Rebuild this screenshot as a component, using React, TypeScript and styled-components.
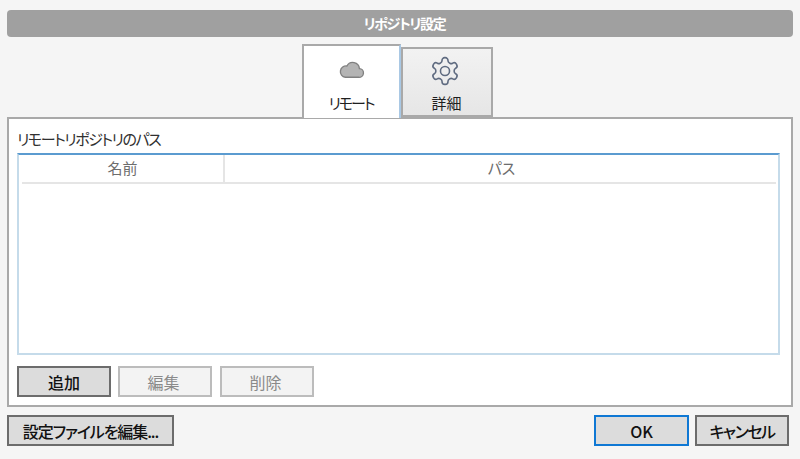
import React from 'react';
import styled, { createGlobalStyle } from 'styled-components';

const GlobalStyle = createGlobalStyle`
  html, body {
    margin: 0;
    padding: 0;
    background: #f5f5f5;
  }
  body {
    font-family: "Noto Sans CJK JP", "Noto Sans", "Liberation Sans", sans-serif;
    font-feature-settings: "palt";
  }
`;

const Page = styled.div`
  width: 800px;
  height: 459px;
  box-sizing: border-box;
  padding: 10px 7px 0;
  display: flex;
  flex-direction: column;
  overflow: hidden;
`;

const TitleBar = styled.div`
  height: 27px;
  flex: none;
  box-sizing: border-box;
  padding-left: 9px;
  border-radius: 4px;
  background: #a0a0a0;
  color: #fff;
  font-size: 14px;
  font-weight: 700;
  letter-spacing: -1.3px;
  line-height: 27px;
  text-align: center;
`;

const TabRow = styled.div`
  display: flex;
  justify-content: center;
  align-items: flex-end;
  height: 81px;
  flex: none;
  padding-right: 6px;
  position: relative;
  z-index: 1;
  margin-bottom: -1px;
`;

const Tab = styled.div<{ $active?: boolean }>`
  box-sizing: border-box;
  width: ${(p) => (p.$active ? 99 : 92)}px;
  height: ${(p) => (p.$active ? 74 : 70)}px;
  margin-bottom: ${(p) => (p.$active ? 0 : 1)}px;
  border: 2px solid #a9a9a9;
  border-bottom: ${(p) => (p.$active ? 'none' : '2px solid #a9a9a9')};
  border-right-color: ${(p) => (p.$active ? '#a9c8e4' : '#a9a9a9')};
  background: ${(p) => (p.$active ? '#fff' : 'linear-gradient(#f2f2f2, #e6e6e6)')};
  display: flex;
  flex-direction: column;
  align-items: center;
  color: #1f1f1f;
  font-size: 15px;
`;

const TabIcon = styled.div<{ $height: number; $shift?: number }>`
  height: ${(p) => p.$height}px;
  flex: none;
  padding-right: ${(p) => p.$shift ?? 0}px;
  display: flex;
  align-items: center;
  justify-content: center;
`;

const TabLabel = styled.span<{ $spacing?: number }>`
  margin-top: 1px;
  line-height: 20px;
  letter-spacing: ${(p) => p.$spacing ?? 0}px;
`;

const Panel = styled.div`
  box-sizing: border-box;
  height: 290px;
  flex: none;
  border: 2px solid #a9a9a9;
  background: #fff;
  padding: 8px 10px 0 8px;
  display: flex;
  flex-direction: column;
`;

const PanelLabel = styled.div`
  font-size: 15px;
  letter-spacing: -1.4px;
  line-height: 24px;
  height: 26px;
  color: #303030;
`;

const ListBox = styled.div`
  box-sizing: border-box;
  width: 763px;
  height: 202px;
  flex: none;
  border: 2px solid #c5dbea;
  border-top: 2px solid #5b9bd0;
  padding: 0 2px 0 3px;
`;

const ListHeader = styled.div`
  display: flex;
  height: 27px;
  border-bottom: 2px solid #e5e5e5;
  color: #6d6d6d;
  font-size: 15px;
  line-height: 26px;
  text-align: center;
`;

const HeaderCell = styled.div<{ $width?: number }>`
  flex: ${(p) => (p.$width ? `0 0 ${p.$width}px` : '1')};
  box-sizing: border-box;
  padding-left: ${(p) => (p.$width ? 0 : 2)}px;
  border-right: ${(p) => (p.$width ? '2px solid #e5e5e5' : 'none')};
`;

const ListActions = styled.div`
  display: flex;
  gap: 7px;
  margin-top: 11px;
`;

const Button = styled.button<{
  $width: number;
  $variant?: 'primary' | 'disabled';
  $offset?: number;
  $spacing?: number;
}>`
  box-sizing: border-box;
  width: ${(p) => p.$width}px;
  height: 31px;
  margin-left: ${(p) => p.$offset ?? 0}px;
  padding: 0 ${(p) => (p.$variant === 'disabled' ? 3 : 0)}px 0 0;
  font-family: inherit;
  font-size: 16px;
  font-feature-settings: inherit;
  letter-spacing: ${(p) => p.$spacing ?? 0}px;
  border: 2px solid
    ${(p) =>
      p.$variant === 'primary' ? '#0f78d4' : p.$variant === 'disabled' ? '#bcbcbc' : '#6c6c6c'};
  background: ${(p) => (p.$variant === 'disabled' ? '#f3f3f3' : '#dcdcdc')};
  color: ${(p) => (p.$variant === 'disabled' ? '#8a8a8a' : '#111')};
  font-weight: ${(p) => (p.$variant === 'disabled' ? 400 : 500)};
`;

const Footer = styled.div`
  display: flex;
  align-items: center;
  justify-content: space-between;
  margin-top: 8px;
  padding-right: 4px;
`;

const FooterRight = styled.div`
  display: flex;
  gap: 6px;
`;

const CloudIcon = () => (
  <svg width="27" height="21" viewBox="0 0 26 20">
    <path
      d="M7 17.5h13a4.2 4.2 0 0 0 .6-8.4A6.4 6.4 0 0 0 8.6 6.6 5.5 5.5 0 0 0 7 17.5z"
      fill="#b4b4b4"
      stroke="#808080"
      strokeWidth="1.3"
    />
  </svg>
);

const GearIcon = () => (
  <svg
    width="32"
    height="32"
    viewBox="0 0 24 24"
    fill="none"
    stroke="#5f6b80"
    strokeWidth="1.2"
    strokeLinecap="round"
    strokeLinejoin="round"
  >
    <path d="M12.22 2h-.44a2 2 0 0 0-2 2v.18a2 2 0 0 1-1 1.73l-.43.25a2 2 0 0 1-2 0l-.15-.08a2 2 0 0 0-2.73.73l-.22.38a2 2 0 0 0 .73 2.73l.15.1a2 2 0 0 1 1 1.72v.51a2 2 0 0 1-1 1.74l-.15.09a2 2 0 0 0-.73 2.73l.22.38a2 2 0 0 0 2.73.73l.15-.08a2 2 0 0 1 2 0l.43.25a2 2 0 0 1 1 1.73V20a2 2 0 0 0 2 2h.44a2 2 0 0 0 2-2v-.18a2 2 0 0 1 1-1.73l.43-.25a2 2 0 0 1 2 0l.15.08a2 2 0 0 0 2.73-.73l.22-.39a2 2 0 0 0-.73-2.73l-.15-.08a2 2 0 0 1-1-1.74v-.5a2 2 0 0 1 1-1.74l.15-.09a2 2 0 0 0 .73-2.73l-.22-.38a2 2 0 0 0-2.73-.73l-.15.08a2 2 0 0 1-2 0l-.43-.25a2 2 0 0 1-1-1.73V4a2 2 0 0 0-2-2z" />
    <circle cx="12" cy="12" r="3.4" />
  </svg>
);

const App = () => (
  <>
    <GlobalStyle />
    <Page>
      <TitleBar>リポジトリ設定</TitleBar>
      <TabRow>
        <Tab $active>
          <TabIcon $height={46}>
            <CloudIcon />
          </TabIcon>
          <TabLabel $spacing={-2}>リモート</TabLabel>
        </Tab>
        <Tab>
          <TabIcon $height={43} $shift={4}>
            <GearIcon />
          </TabIcon>
          <TabLabel>詳細</TabLabel>
        </Tab>
      </TabRow>
      <Panel>
        <PanelLabel>リモートリポジトリのパス</PanelLabel>
        <ListBox>
          <ListHeader>
            <HeaderCell $width={203}>名前</HeaderCell>
            <HeaderCell>パス</HeaderCell>
          </ListHeader>
        </ListBox>
        <ListActions>
          <Button $width={94}>追加</Button>
          <Button $width={94} $variant="disabled">
            編集
          </Button>
          <Button $width={94} $variant="disabled" $offset={1}>
            削除
          </Button>
        </ListActions>
      </Panel>
      <Footer>
        <Button $width={167} $spacing={-1.1}>
          設定ファイルを編集...
        </Button>
        <FooterRight>
          <Button $width={95} $variant="primary">
            OK
          </Button>
          <Button $width={94} $spacing={-1.5}>
            キャンセル
          </Button>
        </FooterRight>
      </Footer>
    </Page>
  </>
);

export default App;
